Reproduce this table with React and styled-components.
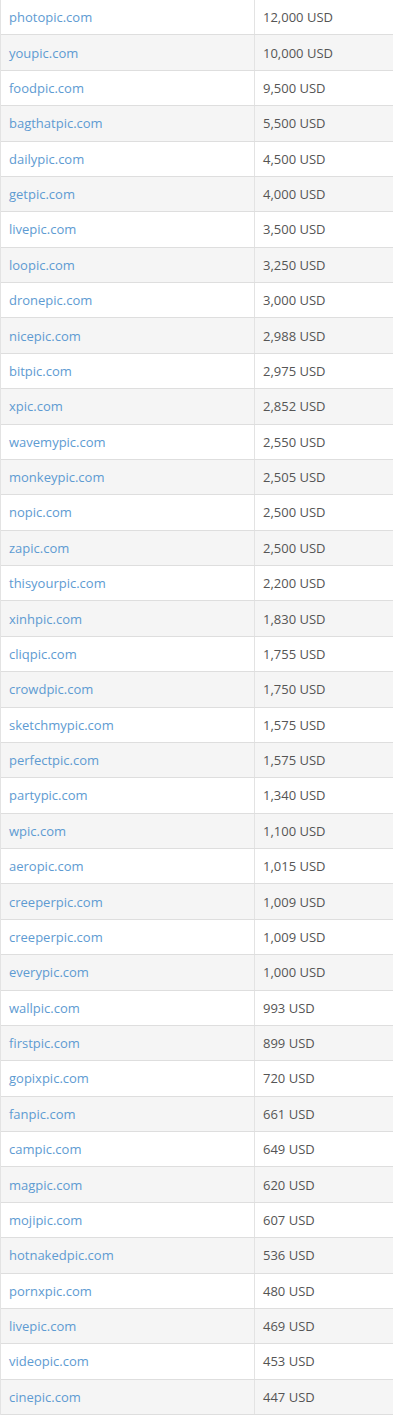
import styled, { createGlobalStyle } from "styled-components";

const GlobalStyle = createGlobalStyle`
  html, body {
    margin: 0;
    padding: 0;
    background: #fff;
  }
  body {
    font-family: "Open Sans", "Liberation Sans", sans-serif;
  }
`;

const domains = [
  ["photopic.com", "12,000 USD"],
  ["youpic.com", "10,000 USD"],
  ["foodpic.com", "9,500 USD"],
  ["bagthatpic.com", "5,500 USD"],
  ["dailypic.com", "4,500 USD"],
  ["getpic.com", "4,000 USD"],
  ["livepic.com", "3,500 USD"],
  ["loopic.com", "3,250 USD"],
  ["dronepic.com", "3,000 USD"],
  ["nicepic.com", "2,988 USD"],
  ["bitpic.com", "2,975 USD"],
  ["xpic.com", "2,852 USD"],
  ["wavemypic.com", "2,550 USD"],
  ["monkeypic.com", "2,505 USD"],
  ["nopic.com", "2,500 USD"],
  ["zapic.com", "2,500 USD"],
  ["thisyourpic.com", "2,200 USD"],
  ["xinhpic.com", "1,830 USD"],
  ["cliqpic.com", "1,755 USD"],
  ["crowdpic.com", "1,750 USD"],
  ["sketchmypic.com", "1,575 USD"],
  ["perfectpic.com", "1,575 USD"],
  ["partypic.com", "1,340 USD"],
  ["wpic.com", "1,100 USD"],
  ["aeropic.com", "1,015 USD"],
  ["creeperpic.com", "1,009 USD"],
  ["creeperpic.com", "1,009 USD"],
  ["everypic.com", "1,000 USD"],
  ["wallpic.com", "993 USD"],
  ["firstpic.com", "899 USD"],
  ["gopixpic.com", "720 USD"],
  ["fanpic.com", "661 USD"],
  ["campic.com", "649 USD"],
  ["magpic.com", "620 USD"],
  ["mojipic.com", "607 USD"],
  ["hotnakedpic.com", "536 USD"],
  ["pornxpic.com", "480 USD"],
  ["livepic.com", "469 USD"],
  ["videopic.com", "453 USD"],
  ["cinepic.com", "447 USD"],
];

const Table = styled.div`
  width: 393px;
  border-left: 1px solid #e3e3e3;
  box-sizing: border-box;
`;

const Row = styled.div`
  display: grid;
  grid-template-columns: 253px 1fr;
  height: 35.375px;
  box-sizing: border-box;
  border-bottom: 1px solid #dedede;
  background: ${(p) => (p.$striped ? "#f5f5f5" : "#fff")};
`;

const Cell = styled.div`
  display: flex;
  align-items: center;
  padding: 0 8px;
  font-size: 13px;
  color: #555;
  & + & {
    border-left: 1px solid #e3e3e3;
  }
`;

const DomainLink = styled.a`
  color: #5e9bd2;
  text-decoration: none;
`;

export default function App() {
  return (
    <>
      <GlobalStyle />
      <Table>
        {domains.map(([name, price], i) => (
          <Row key={i} $striped={i % 2 === 1}>
            <Cell>
              <DomainLink href="/#">{name}</DomainLink>
            </Cell>
            <Cell>{price}</Cell>
          </Row>
        ))}
      </Table>
    </>
  );
}
